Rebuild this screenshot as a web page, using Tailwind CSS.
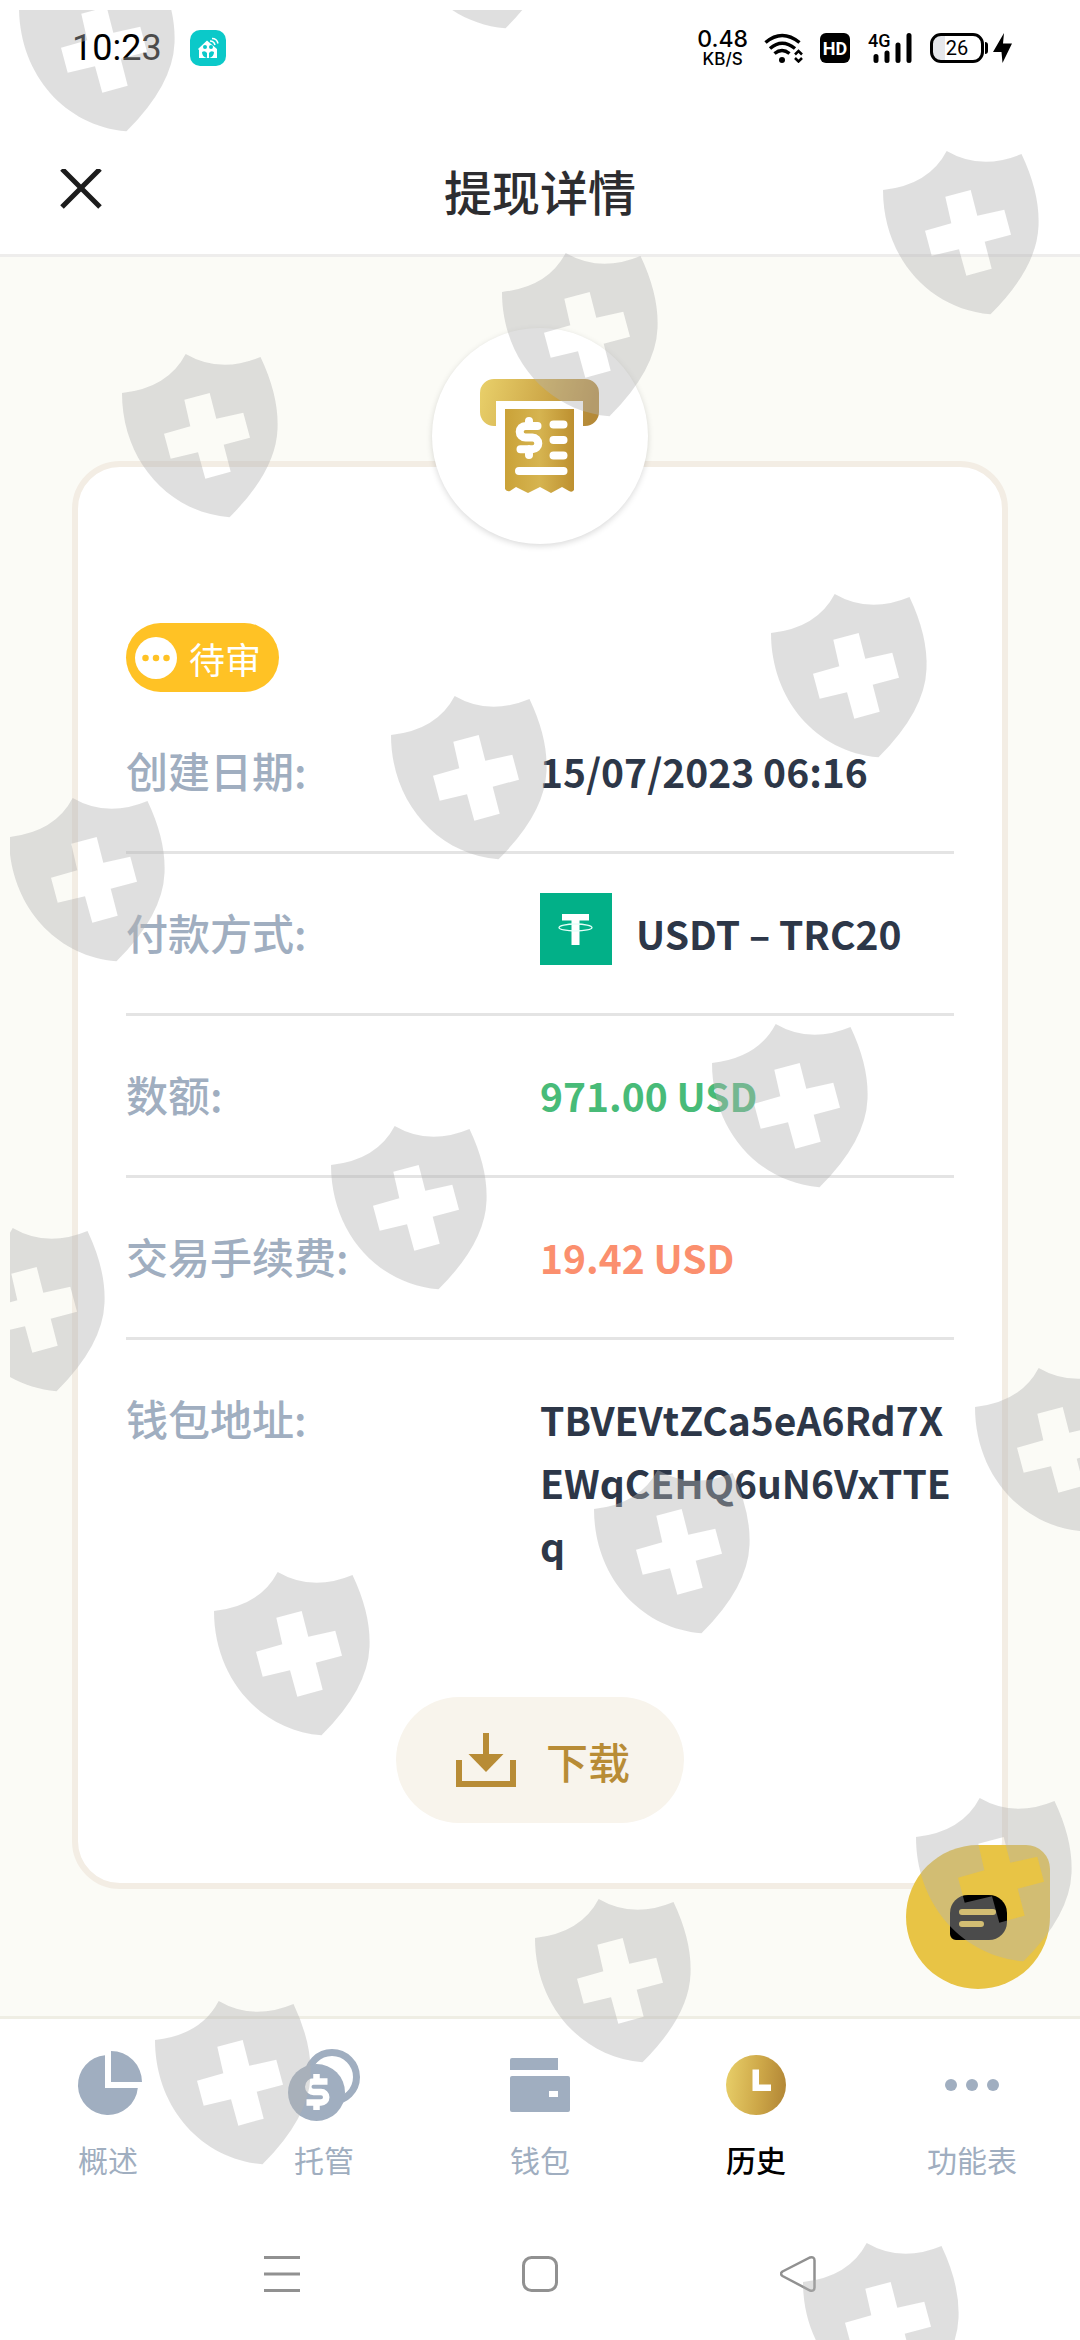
<!DOCTYPE html>
<html lang="zh-CN">
<head>
<meta charset="utf-8">
<meta name="viewport" content="width=device-width, initial-scale=1">
<title>提现详情</title>
<script src="https://cdn.jsdelivr.net/npm/@tailwindcss/browser@4"></script>
</head>
<body class="bg-white font-['Noto_Sans_CJK_SC',sans-serif]">
<div class="relative flex min-h-screen flex-col overflow-hidden">

  <!-- Status bar -->
  <div class="flex h-24 shrink-0 items-center justify-between pr-[68px] pl-[72px] font-['Roboto',sans-serif] text-black">
    <div class="flex items-center gap-7">
      <span class="text-[36px] leading-9">10:23</span>
      <svg class="size-9" viewBox="0 0 36 36" aria-hidden="true">
        <rect width="36" height="36" rx="10" fill="#0bc9c9"/>
        <path d="M8 19 17 10.500l10 8.500v9H9v-8z" fill="#fff"/>
        <circle cx="15" cy="17" r="2" fill="#0bc9c9"/><circle cx="21" cy="17" r="2" fill="#0bc9c9"/>
        <path d="M12 22q3-2 5 1v5q-5-1-5-6zM24 22q-3-2-5 1v5q5-1 5-6z" fill="#0bc9c9"/>
        <path d="M20 11q4 0 5 4M22 8.500q5 0 6 5" stroke="#fff" stroke-width="1.500" fill="none"/>
      </svg>
    </div>
    <div class="flex items-center">
      <div class="flex flex-col items-center font-['Inter',sans-serif] font-medium">
        <span class="text-[23px] leading-[22px]">0.48</span>
        <span class="text-[17px] leading-[18px]">KB/S</span>
      </div>
      <svg class="ml-4 h-[30px] w-10" viewBox="0 0 40 30" fill="none" stroke="#000" stroke-width="3.500" aria-hidden="true">
        <path d="M1.500 9.500Q18 -4.500 35.500 9.500M6 15.500Q18 5 31 15.500M10.500 20.500Q18 14.500 25.500 20.500"/>
        <circle cx="18" cy="27" r="3" fill="#000" stroke="none"/>
        <path d="m31 21.500 3.500-3.500 3.500 3.500M31 25l3.500 3.500 3.500-3.500" stroke-width="2.500"/>
      </svg>
      <span class="ml-4 flex h-[30px] w-[30px] items-center justify-center rounded-md bg-black text-[18px] font-bold text-white">HD</span>
      <svg class="ml-[18px] h-[30px] w-[44px] overflow-visible" viewBox="0 0 44 30" aria-hidden="true">
        <text x="0" y="14" font-family="Roboto" font-size="18" font-weight="500">4G</text>
        <path d="M8 23.500v4M19 20v7.500M30 12v15.500M41 2.500v25" stroke="#000" stroke-width="5" stroke-linecap="round"/>
      </svg>
      <div class="ml-[18px] flex items-center">
        <span class="flex h-[30px] w-[54px] items-center justify-center rounded-[11px] border-[3px] border-black bg-linear-to-r from-gray-200 from-25% to-transparent to-25% text-[20px]">26</span>
        <span class="ml-px h-3 w-[3px] rounded-r-sm bg-black"></span>
      </div>
      <svg class="ml-[5px] h-[30px] w-[19px]" viewBox="0 0 19 30" aria-hidden="true"><path d="M11 0 0 19h8.500L9.500 30 19 10.500h-9z"/></svg>
    </div>
  </div>

  <!-- Page header -->
  <header class="shrink-0 border-b-[3px] border-[#eeedec] pt-[30px]">
    <div class="grid h-32 grid-cols-[1fr_auto_1fr] items-center px-[60px]">
      <button type="button" aria-label="关闭" class="size-[42px]">
        <svg class="size-[42px]" viewBox="0 0 42 42" aria-hidden="true"><path d="m2 0 38 38M40 0 2 38" stroke="#1c1c1c" stroke-width="5"/></svg>
      </button>
      <h1 class="text-[48px] leading-[60px] font-medium text-[#2d2d30]">提现详情</h1>
    </div>
  </header>

  <!-- Details -->
  <main class="relative grow bg-[#fbfbf6] px-[72px] pt-[71px] pb-[127px]">
    <div class="relative z-10 mx-auto flex size-[216px] items-center justify-center rounded-full bg-white shadow-[0_2px_6px_rgba(0,0,0,0.15)]">
      <svg class="h-[114px] w-[120px]" viewBox="0 0 120 114" aria-hidden="true">
        <defs>
          <linearGradient id="gold" x1="0" y1="0" x2="1" y2="0.100"><stop offset="0" stop-color="#e9d06a"/><stop offset=".6" stop-color="#cda748"/><stop offset="1" stop-color="#b58a38"/></linearGradient>
          <linearGradient id="gold-soft" x1="0" y1="0" x2="1" y2="0"><stop offset="0" stop-color="#caa238"/><stop offset=".5" stop-color="#d6b450"/><stop offset="1" stop-color="#bd9030"/></linearGradient>
        </defs>
        <path fill="url(#gold)" d="M14 0h91a14 14 0 0 1 14 14v19a14 14 0 0 1-14 14h-2V22H16v25h-2a14 14 0 0 1-14-14V14a14 14 0 0 1 14-14z"/>
        <path fill="url(#gold-soft)" d="M25 30h69v81q-2 3-5 1l-7-4-11 6-11-6-12 6-12-6-6 4q-3 1-5-2z"/>
        <path fill="none" stroke="#fff" stroke-width="8" stroke-linecap="round" d="M57.500 47H45.500a5.800 5.800 0 0 0 0 11.600h7a5.800 5.800 0 0 1 0 11.600H40.500M49 42v5M49 70v6M73.500 45.500h10M73.500 61h10M73.500 76.500h10M39 92h44.500"/>
      </svg>
    </div>
    <section class="-mt-[83px] rounded-[48px] border-[6px] border-[#f3ede4] bg-white px-12 pt-[156px] pb-[60px]">
      <span class="inline-flex h-[69px] items-center gap-3 rounded-full bg-[#ffc225] pr-[18px] pl-[9px] align-top text-[36px] text-white">
        <svg class="size-[42px]" viewBox="0 0 42 42" aria-hidden="true"><circle cx="21" cy="21" r="21" fill="#fff"/><path d="M10.500 21h.01M21 21h.01M31.500 21h.01" stroke="#ffc225" stroke-width="6.500" stroke-linecap="round"/></svg>
        待审
      </span>
      <dl class="text-[39px] leading-[63px] font-bold text-[#2d3748]">
        <div class="grid grid-cols-2 border-b-[3px] border-[#e4e4e4] py-12">
          <dt class="text-[42px] leading-[60px] font-medium text-[#a0aec0]">创建日期:</dt>
          <dd>15/07/2023 06:16</dd>
        </div>
        <div class="grid grid-cols-2 border-b-[3px] border-[#e4e4e4] py-12">
          <dt class="text-[42px] leading-[60px] font-medium text-[#a0aec0]">付款方式:</dt>
          <dd class="flex h-[63px] items-end gap-6">
            <svg class="size-[72px] shrink-0" viewBox="0 0 72 72" aria-hidden="true">
              <rect width="72" height="72" fill="#02b088"/>
              <path d="M22 21h27v6.500h-9.500V52h-8V27.500H22z" fill="#fff"/>
              <ellipse cx="35.500" cy="34.500" rx="16.500" ry="3.500" fill="none" stroke="#e4fff8" stroke-width="1.300"/>
            </svg>
            USDT – TRC20
          </dd>
        </div>
        <div class="grid grid-cols-2 border-b-[3px] border-[#e4e4e4] py-12">
          <dt class="text-[42px] leading-[60px] font-medium text-[#a0aec0]">数额:</dt>
          <dd class="text-[#48bb78]">971.00 USD</dd>
        </div>
        <div class="grid grid-cols-2 border-b-[3px] border-[#e4e4e4] py-12">
          <dt class="text-[42px] leading-[60px] font-medium text-[#a0aec0]">交易手续费:</dt>
          <dd class="text-[#fb8f6e]">19.42 USD</dd>
        </div>
        <div class="grid grid-cols-2 py-12">
          <dt class="text-[42px] leading-[60px] font-medium text-[#a0aec0]">钱包地址:</dt>
          <dd class="break-all">TBVEVtZCa5eA6Rd7XEWqCEHQ6uN6VxTTEq</dd>
        </div>
      </dl>
      <button type="button" class="mx-auto mt-[72px] flex h-[126px] items-center gap-[30px] rounded-full bg-[#f8f4ec] pr-[54px] pl-[60px] text-[42px] leading-[63px] font-medium text-[#b88c36]">
        <svg class="h-[54px] w-[60px]" viewBox="0 0 60 54" aria-hidden="true">
          <path d="M3 27v24h54V27M30 0v24" fill="none" stroke="#b88c36" stroke-width="6"/>
          <path d="M12.500 21h35L30 39z" fill="#b88c36"/>
        </svg>
        下载
      </button>
    </section>
    <button type="button" aria-label="客服" class="absolute right-[30px] bottom-[27px] z-10 flex size-36 items-center justify-center rounded-[72px] rounded-tr-[24px] bg-[#e8c445]">
      <svg class="h-[45px] w-[57px]" viewBox="0 0 57 45" aria-hidden="true">
        <path d="M18 0h21a18 18 0 0 1 18 18v9a18 18 0 0 1-18 18H6a6 6 0 0 1-6-6V18A18 18 0 0 1 18 0z"/>
        <path d="M12 17h31M12 29h19" stroke="#e8c445" stroke-width="6" stroke-linecap="round"/>
      </svg>
    </button>
  </main>

  <!-- Tab bar -->
  <nav class="grid shrink-0 grid-cols-5 border-t-[3px] border-[#efeee4] bg-white pt-[30px] pb-[26px] text-[30px] leading-[45px] text-[#a0aec0]">
    <a href="#" class="flex flex-col items-center gap-4">
      <svg class="size-[72px]" viewBox="0 0 72 72" fill="#a0aec0" aria-hidden="true"><path d="M33 6.200A30 30 0 1 0 65.800 39H33zM39 2a31 31 0 0 1 31 31H39z"/></svg>
      概述
    </a>
    <a href="#" class="flex flex-col items-center gap-4">
      <svg class="size-[72px]" viewBox="0 0 72 72" fill="none" aria-hidden="true">
        <circle cx="44" cy="28" r="24.500" stroke="#a0aec0" stroke-width="7"/>
        <circle cx="28.500" cy="43.500" r="28.500" fill="#a0aec0"/>
        <path d="M39.500 32.500h-14a5.250 5.250 0 0 0 0 10.500h7.500a5.250 5.250 0 0 1 0 10.500H18.500M28.500 25v7M28.500 53v8" stroke="#fff" stroke-width="6.500"/>
      </svg>
      托管
    </a>
    <a href="#" class="flex flex-col items-center gap-4">
      <svg class="size-[72px]" viewBox="0 0 72 72" fill="#a0aec0" aria-hidden="true">
        <path d="M6 11a2 2 0 0 1 2-2h46v12H6z"/><rect x="6" y="27" width="60" height="36" rx="2"/><rect x="45" y="42" width="9" height="6" fill="#fff"/>
      </svg>
      钱包
    </a>
    <a href="#" aria-current="page" class="flex flex-col items-center gap-4 font-medium text-black">
      <svg class="size-[72px]" viewBox="0 0 72 72" aria-hidden="true"><circle cx="36" cy="36" r="30" fill="url(#gold)"/><path d="M32.500 20.500h6.500v15h12v6.500H32.500z" fill="#fff"/></svg>
      历史
    </a>
    <a href="#" class="flex flex-col items-center gap-4">
      <svg class="size-[72px]" viewBox="0 0 72 72" fill="#a0aec0" aria-hidden="true"><circle cx="15" cy="36" r="6"/><circle cx="36" cy="36" r="6"/><circle cx="57" cy="36" r="6"/></svg>
      功能表
    </a>
  </nav>

  <!-- System navigation -->
  <div class="flex h-[132px] shrink-0 items-center justify-center gap-[222px]">
    <button type="button" aria-label="最近任务"><svg class="size-9" viewBox="0 0 36 36" aria-hidden="true"><path d="M0 1.500h36M0 18h36M0 34.500h36" stroke="#919191" stroke-width="3"/></svg></button>
    <button type="button" aria-label="主屏幕"><svg class="size-9" viewBox="0 0 36 36" aria-hidden="true"><rect x="1.500" y="1.500" width="33" height="33" rx="8" fill="none" stroke="#919191" stroke-width="3"/></svg></button>
    <button type="button" aria-label="返回"><svg class="size-9" viewBox="0 0 36 36" aria-hidden="true"><path d="M2.500 15.500 30 1.500q4.500-1 4.500 3v27q0 4-4.500 3L2.500 20q-3-2.200 0-4.500z" fill="none" stroke="#919191" stroke-width="2.500"/></svg></button>
  </div>

  <!-- Shield watermark over the whole screen -->
  <div class="pointer-events-none absolute top-2.5 right-0 bottom-0 left-2.5 z-20 overflow-hidden">
    <svg class="size-full" fill="#b2b2b2" fill-opacity=".42" fill-rule="evenodd" aria-hidden="true">
      <defs>
        <path id="shield" d="M63.700 0Q98 20 138.500 3Q157 42 155.500 75Q154 117 107.500 163.300C45 158 0 105 0 39Q46 34 63.700 0ZM62.300 45.700 87.700 39 94.300 64.700 121.300 58.700 128 83.700 101.700 90.700 108.700 117.700 83.300 124.700 76 98.300 48.700 104.700 42 79.700 68.300 72.300Z"/>
      </defs>
      <use href="#shield" x="9" y="-42"/>
      <use href="#shield" x="388" y="-145"/>
      <use href="#shield" x="873" y="141"/>
      <use href="#shield" x="492" y="243"/>
      <use href="#shield" x="112" y="344"/>
      <use href="#shield" x="761" y="584"/>
      <use href="#shield" x="381" y="686"/>
      <use href="#shield" x="-1" y="788"/>
      <use href="#shield" x="702" y="1014"/>
      <use href="#shield" x="321" y="1116"/>
      <use href="#shield" x="-61" y="1218"/>
      <use href="#shield" x="965" y="1358"/>
      <use href="#shield" x="584" y="1460"/>
      <use href="#shield" x="204" y="1562"/>
      <use href="#shield" x="906" y="1788"/>
      <use href="#shield" x="525" y="1889"/>
      <use href="#shield" x="145" y="1991"/>
      <use href="#shield" x="793" y="2233"/>
    </svg>
  </div>
</div>
</body>
</html>
